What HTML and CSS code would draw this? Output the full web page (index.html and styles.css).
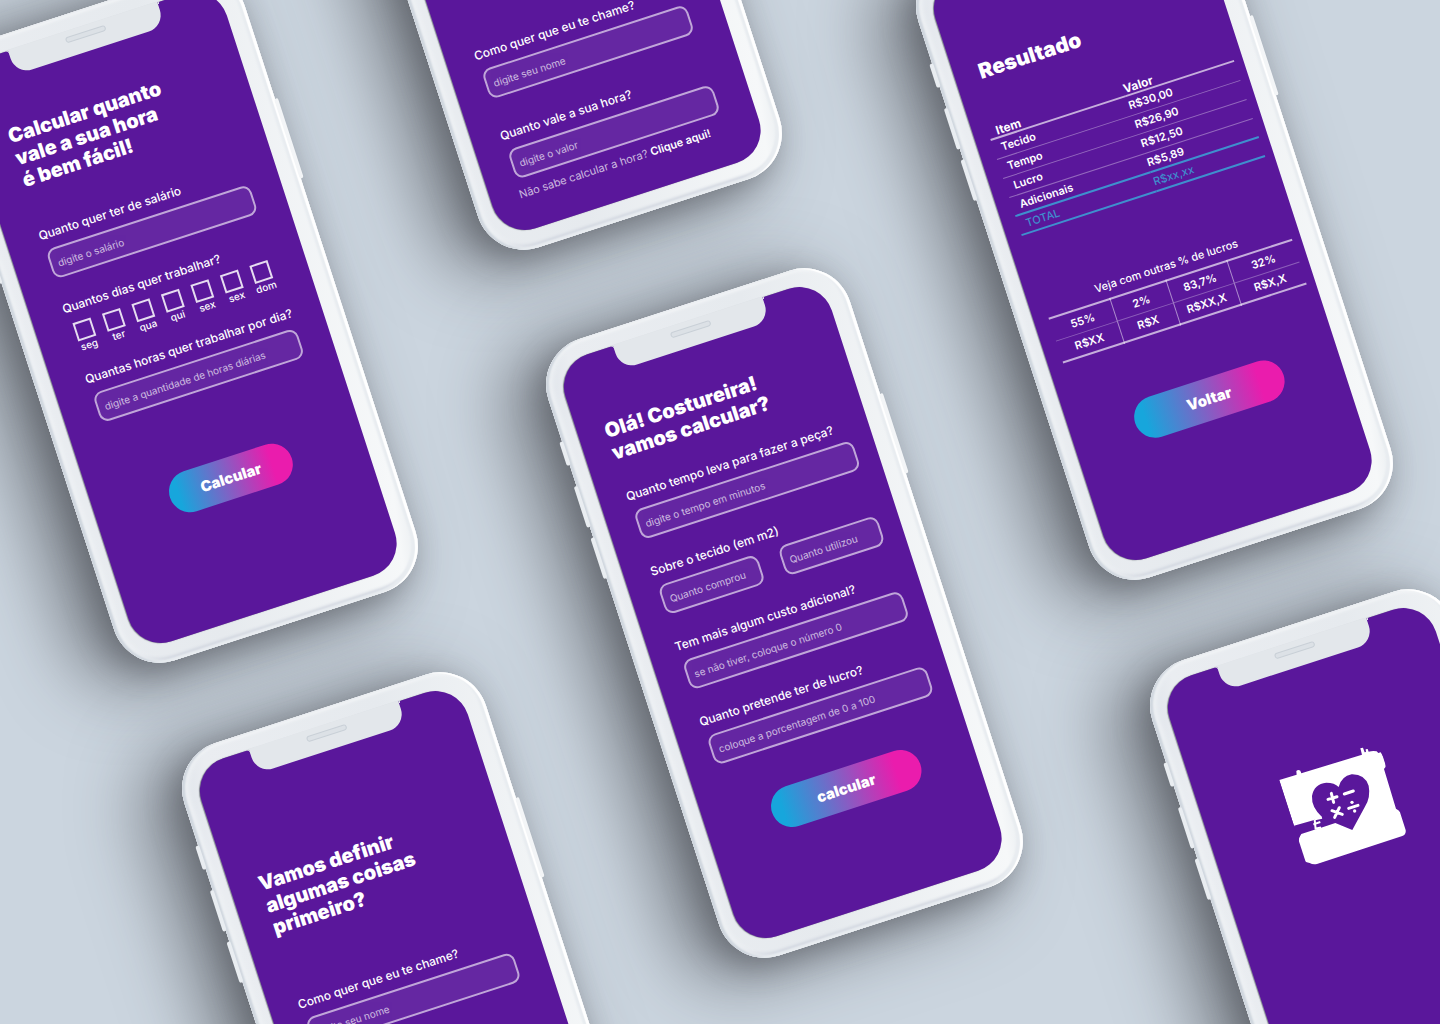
FILE: index.html
```html
<!DOCTYPE html>
<html lang="pt-BR">
<head>
<meta charset="utf-8">
<meta name="viewport" content="width=device-width, initial-scale=1">
<title>Calculadora da Costureira</title>
<link rel="stylesheet" href="styles.css">
</head>
<body>
<main class="stage">

  <section class="phone phone-rate">
    <i class="side-key key-mute"></i><i class="side-key key-up"></i><i class="side-key key-down"></i><i class="side-key key-power"></i>
    <div class="screen">
      <div class="notch"><span class="speaker"></span></div>
      <form class="content rate">
        <h2 class="title">Calcular quanto<br>vale a sua hora<br>é bem fácil!</h2>
        <div class="field">
          <label for="salary">Quanto quer ter de salário</label>
          <input class="box" id="salary" type="text" placeholder="digite o salário">
        </div>
        <fieldset class="field days-field">
          <legend>Quantos dias quer trabalhar?</legend>
          <div class="days">
            <label class="day"><input type="checkbox">seg</label>
            <label class="day"><input type="checkbox">ter</label>
            <label class="day"><input type="checkbox">qua</label>
            <label class="day"><input type="checkbox">qui</label>
            <label class="day"><input type="checkbox">sex</label>
            <label class="day"><input type="checkbox">sex</label>
            <label class="day"><input type="checkbox">dom</label>
          </div>
        </fieldset>
        <div class="field">
          <label for="hours">Quantas horas quer trabalhar por dia?</label>
          <input class="box" id="hours" type="text" placeholder="digite a quantidade de horas diárias">
        </div>
        <button class="action small" type="button">Calcular</button>
      </form>
    </div>
  </section>

  <section class="phone phone-name">
    <i class="side-key key-mute"></i><i class="side-key key-up"></i><i class="side-key key-down"></i><i class="side-key key-power"></i>
    <div class="screen">
      <form class="content name-end">
        <div class="field">
          <label for="name-a">Como quer que eu te chame?</label>
          <input class="box" id="name-a" type="text" placeholder="digite seu nome">
        </div>
        <div class="field">
          <label for="rate">Quanto vale a sua hora?</label>
          <input class="box" id="rate" type="text" placeholder="digite o valor">
        </div>
        <p class="hint">Não sabe calcular a hora? <a href="#">Clique aqui!</a></p>
      </form>
    </div>
  </section>

  <section class="phone phone-result">
    <i class="side-key key-mute"></i><i class="side-key key-up"></i><i class="side-key key-down"></i><i class="side-key key-power"></i>
    <div class="screen">
      <div class="content result">
        <h2 class="title heavy">Resultado</h2>
        <table class="costs">
          <thead><tr><th>Item</th><th>Valor</th></tr></thead>
          <tbody>
            <tr><td>Tecido</td><td>R$30,00</td></tr>
            <tr><td>Tempo</td><td>R$26,90</td></tr>
            <tr><td>Lucro</td><td>R$12,50</td></tr>
            <tr><td>Adicionais</td><td>R$5,89</td></tr>
          </tbody>
          <tfoot><tr><td>TOTAL</td><td>R$xx,xx</td></tr></tfoot>
        </table>
        <table class="rates">
          <caption>Veja com outras % de lucros</caption>
          <colgroup><col class="c1"><col class="c2"><col class="c3"><col class="c4"></colgroup>
          <tbody>
            <tr><td>55%</td><td>2%</td><td>83,7%</td><td>32%</td></tr>
            <tr><td>R$XX</td><td>R$X</td><td>R$XX,X</td><td>R$X,X</td></tr>
          </tbody>
        </table>
        <button class="action" type="button">Voltar</button>
      </div>
    </div>
  </section>

  <section class="phone phone-intro">
    <i class="side-key key-mute"></i><i class="side-key key-up"></i><i class="side-key key-down"></i><i class="side-key key-power"></i>
    <div class="screen">
      <div class="notch"><span class="speaker"></span></div>
      <form class="content name-start">
        <h2 class="title">Vamos definir<br>algumas coisas<br>primeiro?</h2>
        <div class="field">
          <label for="name-b">Como quer que eu te chame?</label>
          <input class="box" id="name-b" type="text" placeholder="digite seu nome">
        </div>
      </form>
    </div>
  </section>

  <section class="phone phone-piece">
    <i class="side-key key-mute"></i><i class="side-key key-up"></i><i class="side-key key-down"></i><i class="side-key key-power"></i>
    <div class="screen">
      <div class="notch"><span class="speaker"></span></div>
      <form class="content piece">
        <h2 class="title">Olá! Costureira!<br>vamos calcular?</h2>
        <div class="field">
          <label for="time">Quanto tempo leva para fazer a peça?</label>
          <input class="box" id="time" type="text" placeholder="digite o tempo em minutos">
        </div>
        <div class="field">
          <label for="bought">Sobre o tecido (em m2)</label>
          <div class="pair">
            <input class="box" id="bought" type="text" placeholder="Quanto comprou">
            <input class="box" type="text" aria-label="Quanto utilizou" placeholder="Quanto utilizou">
          </div>
        </div>
        <div class="field">
          <label for="extra">Tem mais algum custo adicional?</label>
          <input class="box" id="extra" type="text" placeholder="se não tiver, coloque o número 0">
        </div>
        <div class="field">
          <label for="profit">Quanto pretende ter de lucro?</label>
          <input class="box" id="profit" type="text" placeholder="coloque a porcentagem de 0 a 100">
        </div>
        <button class="action" type="button">calcular</button>
      </form>
    </div>
  </section>

  <section class="phone phone-splash">
    <i class="side-key key-mute"></i><i class="side-key key-up"></i><i class="side-key key-down"></i><i class="side-key key-power"></i>
    <div class="screen">
      <div class="notch"><span class="speaker"></span></div>
      <div class="content splash">
        <svg class="logo" viewBox="0 0 106 98" width="106" height="98" role="img" aria-label="Máquina de costura">
          <g transform="translate(-80.5 -230) rotate(18) scale(.33333)">
            <path fill="#fff" d="M449 598 501 582 500 571Q506 565 512 570L515 578 697 522 692 503 700 501 705 515 709 514 708 506 714 505 717 513Q730 509 741 512L746 517 753 515 761 528Q770 550 767 560L763 565 799 684Q809 689 811 695L828 748Q830 761 818 766L562 850Q550 853 540 847 521 844 519 832L508 793Q506 772 512 762L493 735Z"/>
            <path fill="#5a179b" d="M480 741 493 735 551 719 577 709Q545 680 547 646 553 610 590 606 615 606 627 619 635 587 666 581 705 580 717 615 724 650 705 680L668 748 617 727 574 741 552 748 515 760 506 775Z"/>
            <path fill="none" stroke="#fff" stroke-width="6" d="M555 716 558 746M551 731 572 724M556 716 577 711M556 744 574 740"/>
            <g fill="none" stroke="#fff" stroke-width="9" stroke-linecap="round">
              <path d="M595 656 622 648M605 638 612 665M644 640 671 631M607 690 638 701M615 710 629 681M657 683 685 674"/>
            </g>
            <g fill="#fff"><circle cx="667" cy="665" r="5"/><circle cx="675" cy="691" r="5"/></g>
          </g>
        </svg>
      </div>
    </div>
  </section>

</main>
</body>
</html>
```
FILE: styles.css
```css
:root {
  --purple: #5a179b;
  --blue: #3f8fce;
}

* { box-sizing: border-box; }

body {
  margin: 0;
  background: #cbd5df;
  color: #fff;
  font-family: Inter, "Liberation Sans", sans-serif;
}

.stage {
  position: relative;
  min-height: 100vh;
  overflow: hidden;
  background: #cbd5df;
}

/* Handsets, scattered on the canvas around the middle of the window */
.phone {
  position: absolute;
  width: 317px;
  height: 648px;
  padding: 17px 20px 19px 17px;
  border-radius: 48px;
  transform: rotate(-18deg);
  background: linear-gradient(100deg, #dde2e9 0%, #eaedf1 8%, #e6eaee 50%, #f6f8f9 94%, #e6eaee 100%);
  box-shadow:
    inset -3px 0 1px #fff,
    inset -6px -3px 2px #e8ecf0,
    inset 3px 0 2px #cfd6de,
    inset 7px 0 4px #eef1f4,
    inset 0 -5px 3px #cfd4de,
    inset 0 3px 3px #f3f5f7,
    -10px 6px 30px rgba(70, 74, 80, .45),
    -36px 4px 70px 8px rgba(70, 74, 80, .6);
}

.phone-rate { left: calc(50% - 699px); top: -6px; }
.phone-name { left: calc(50% - 335px); top: -419px; }
.phone-result { left: calc(50% + 276px); top: -89px; }
.phone-intro { left: calc(50% - 458px); top: 693px; }
.phone-piece { left: calc(50% - 94px); top: 289px; }
.phone-splash { left: calc(50% + 510px); top: 610px; }

.side-key {
  position: absolute;
  left: -3px;
  width: 4px;
  border-radius: 2px;
  background: #e9edf1;
}
.key-mute { top: 92px; height: 25px; }
.key-up { top: 139px; height: 43px; }
.key-down { top: 193px; height: 43px; }
.key-power { top: 145px; left: auto; right: -3px; height: 84px; background: #f3f5f7; }

.screen {
  position: relative;
  height: 100%;
  border-radius: 34px;
  background: var(--purple);
  box-shadow: -1px 0 1px rgba(60, 66, 76, .6);
}

.notch {
  position: absolute;
  top: -1px;
  left: 61px;
  width: 157px;
  height: 26px;
  display: flex;
  justify-content: center;
  padding-top: 6px;
  border-radius: 0 0 17px 17px;
  background: #e3e7eb;
}
.notch::before,
.notch::after {
  content: "";
  position: absolute;
  top: 1px;
  width: 4px;
  height: 4px;
}
.notch::before { left: -4px; background: radial-gradient(circle at 0 100%, transparent 4px, #e3e7eb 4px); }
.notch::after { right: -4px; background: radial-gradient(circle at 100% 100%, transparent 4px, #e3e7eb 4px); }

.speaker {
  width: 42px;
  height: 6px;
  border: 1px solid #c9d0d7;
  border-radius: 3px;
  background: #dce1e6;
}

/* Screen content */
.content { display: flex; flex-direction: column; }

.title {
  margin: 0;
  font-size: 20px;
  line-height: 23px;
  font-weight: 900;
}
.heavy { font-size: 21px; }

.field {
  display: flex;
  flex-direction: column;
  gap: 7px;
  margin: 0;
  padding: 0;
  border: 0;
  font-size: 12px;
  line-height: 16px;
  font-weight: 500;
  white-space: nowrap;
}
.field > label { align-self: flex-start; }
.field legend { padding: 0; margin-bottom: 8px; }

.box {
  width: 100%;
  height: 31px;
  padding: 0 6px;
  border: 2px solid rgba(255, 255, 255, .62);
  border-radius: 9px;
  background: rgba(255, 255, 255, .07);
  background-clip: padding-box;
  color: #fff;
  font: 400 10px/16px Inter, "Liberation Sans", sans-serif;
}
.box::placeholder { color: #fff; opacity: .68; }

.field > .box { width: auto; }
.field > .box,
.pair { margin-left: 2px; }
.pair { display: grid; grid-template-columns: 1fr 1fr; gap: 22px; }

.action {
  align-self: center;
  width: 156px;
  height: 42px;
  padding: 0;
  border: 0;
  border-radius: 21px;
  background: linear-gradient(90deg, #17a6dc 7%, #ea1cad 84%);
  color: #fff;
  font: 900 15px/20px Inter, "Liberation Sans", sans-serif;
}
.action.small { width: 128px; }

.piece { padding: 68px 21px 0 27px; gap: 25px; }
.piece .title { margin-bottom: 1px; }
.piece .action { margin: 16px 0 0 6px; }

.rate { padding: 71px 31px 0 33px; }
.rate .title { padding-left: 2px; margin-bottom: 38px; }
.rate .field { margin-bottom: 23px; }
.rate .action { margin-top: 48px; }
.rate .days-field { display: block; margin-bottom: 19px; }

.days {
  display: flex;
  justify-content: space-between;
  width: 205px;
  margin-left: 5px;
}
.day {
  display: flex;
  flex-direction: column;
  align-items: center;
  width: 19px;
  font-size: 10px;
  line-height: 12px;
}
.day input {
  appearance: none;
  width: 19px;
  height: 19px;
  margin: 0;
  border: 2px solid #e6dcf0;
}

.name-end { padding: 422px 34px 0 29px; }
.name-end .field { margin-bottom: 30px; }
.name-end .field + .field { margin-bottom: 7px; }
.hint {
  margin: 0;
  font-size: 11px;
  line-height: 16px;
  color: rgba(255, 255, 255, .7);
  white-space: nowrap;
}
.hint a { color: #fff; font-weight: 600; text-decoration: none; }

.name-start { padding: 120px 31px 0 29px; gap: 61px; }

.result { padding: 86px 9px 0 15px; font-size: 11px; line-height: 16px; font-weight: 500; }
.result .title { padding-left: 10px; margin-bottom: 39px; }
.result .action { margin: 58px 0 0 0; }

table { width: 100%; border-collapse: collapse; table-layout: fixed; }
th, td { height: 20px; padding: 0; text-align: left; }

.costs th:first-child, .costs td:first-child { width: 142px; padding-left: 8px; }
.costs th { height: 18px; font-size: 12px; line-height: 12px; font-weight: 700; vertical-align: bottom; }
.costs thead tr { border-bottom: 2px solid rgba(255, 255, 255, .65); }
.costs tbody tr { border-bottom: 1px solid rgba(255, 255, 255, .35); }
.costs tbody tr:last-child, .costs tfoot tr { border-bottom: 2px solid var(--blue); }
.costs tfoot { color: var(--blue); }
.costs tbody td { font-weight: 600; }

.rates { margin-top: 65px; }
.rates caption { padding-bottom: 5px; white-space: nowrap; }
.rates td { height: 23px; text-align: center; font-weight: 600; }
.rates td + td { border-left: 1px solid rgba(255, 255, 255, .5); }
.rates tr { border-bottom: 1px solid rgba(255, 255, 255, .3); }
.rates tr:first-child { border-top: 2px solid rgba(255, 255, 255, .65); }
.rates tr:last-child { border-bottom: 2px solid rgba(255, 255, 255, .65); }
.c1, .c3 { width: 64px; }
.c2 { width: 59px; }
.c4 { width: 69px; }

.splash { padding: 121px 0 0 85px; }
.logo { display: block; }
```
